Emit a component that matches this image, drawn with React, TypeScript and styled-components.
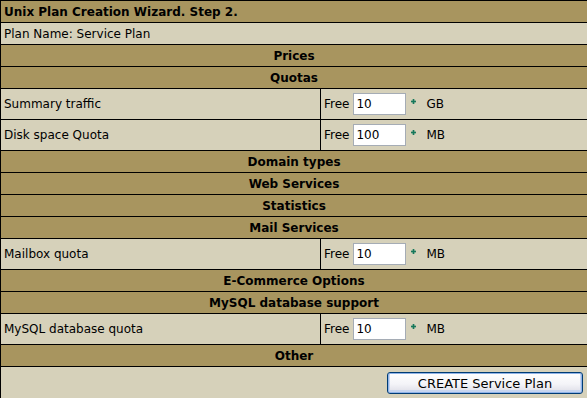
import React from "react";
import styled, { createGlobalStyle } from "styled-components";

const Global = createGlobalStyle`
  html, body { margin: 0; padding: 0; overflow: hidden; background: #d6d1ba; }
  body { font-family: "DejaVu Sans", Verdana, sans-serif; font-size: 12px; color: #000; }
`;

const DARK = "#a8955f";
const LIGHT = "#d6d1ba";

const Table = styled.table`
  width: 588px;
  border-collapse: collapse;
  table-layout: fixed;
  font-family: "DejaVu Sans", Verdana, sans-serif;
  font-size: 12px;
`;

const Row = styled.tr<{ $tall?: boolean }>`
  height: ${(p) => (p.$tall ? 31 : 22)}px;
`;

const TitleCell = styled.td`
  background: ${DARK};
  border: 1px solid #000;
  font-weight: bold;
  padding: 0 3px;
  height: 21px;
  white-space: nowrap;
`;

const SectionCell = styled.td`
  background: ${DARK};
  border: 1px solid #000;
  font-weight: bold;
  text-align: center;
  padding: 0 3px;
  height: 21px;
`;

const Cell = styled.td<{ $tall?: boolean }>`
  background: ${LIGHT};
  border: 1px solid #000;
  padding: 0 3px;
  height: ${(p) => (p.$tall ? 30 : 21)}px;
  white-space: nowrap;
`;

const ValueWrap = styled.div`
  display: flex;
  align-items: center;
`;

const FreeLabel = styled.span`
  margin-right: 4px;
`;

const NumInput = styled.input`
  width: 53px;
  height: 22px;
  box-sizing: border-box;
  border: 1px solid #a5acb5;
  background: #fff;
  padding: 0 2px;
  font-family: "DejaVu Sans", Verdana, sans-serif;
  font-size: 12px;
  color: #000;
  outline: none;
`;

const PlusIcon = styled.svg`
  width: 5px;
  height: 5px;
  margin: 0 10px 5px 5px;
`;

const Unit = styled.span``;

const ButtonCell = styled.td`
  background: ${LIGHT};
  border: 1px solid #000;
  text-align: right;
  padding: 5px 4px 5px 0;
`;

const CreateButton = styled.button`
  width: 196px;
  height: 22px;
  border: 1px solid #003c74;
  border-radius: 3px;
  background: linear-gradient(#ffffff 0%, #f4f4f8 55%, #dcdce6 100%);
  box-shadow: inset 0 0 0 1px #8fb3e8, inset 0 -1px 0 2px #c8d6ef;
  font-family: "DejaVu Sans", Verdana, sans-serif;
  font-size: 13px;
  color: #000;
  padding: 0;
  cursor: pointer;
`;

function Plus() {
  return (
    <PlusIcon viewBox="0 0 6 6">
      <rect x="2" y="0" width="2" height="6" fill="#17785a" />
      <rect x="0" y="2" width="6" height="2" fill="#17785a" />
    </PlusIcon>
  );
}

type Field = { label: string; value: string; unit: string };

function FieldRow({ label, value, unit }: Field) {
  return (
    <Row $tall>
      <Cell $tall>{label}</Cell>
      <Cell $tall>
        <ValueWrap>
          <FreeLabel>Free</FreeLabel>
          <NumInput defaultValue={value} />
          <Plus />
          <Unit>{unit}</Unit>
        </ValueWrap>
      </Cell>
    </Row>
  );
}

function Section({ title }: { title: string }) {
  return (
    <Row>
      <SectionCell colSpan={2}>{title}</SectionCell>
    </Row>
  );
}

export default function App() {
  return (
    <>
      <Global />
      <Table>
        <colgroup>
          <col style={{ width: 320 }} />
          <col />
        </colgroup>
        <tbody>
          <Row>
            <TitleCell colSpan={2}>Unix Plan Creation Wizard. Step 2.</TitleCell>
          </Row>
          <Row>
            <Cell colSpan={2}>Plan Name: Service Plan</Cell>
          </Row>
          <Section title="Prices" />
          <Section title="Quotas" />
          <FieldRow label="Summary traffic" value="10" unit="GB" />
          <FieldRow label="Disk space Quota" value="100" unit="MB" />
          <Section title="Domain types" />
          <Section title="Web Services" />
          <Section title="Statistics" />
          <Section title="Mail Services" />
          <FieldRow label="Mailbox quota" value="10" unit="MB" />
          <Section title="E-Commerce Options" />
          <Section title="MySQL database support" />
          <FieldRow label="MySQL database quota" value="10" unit="MB" />
          <Section title="Other" />
          <Row>
            <ButtonCell colSpan={2}>
              <CreateButton>CREATE Service Plan</CreateButton>
            </ButtonCell>
          </Row>
        </tbody>
      </Table>
    </>
  );
}
